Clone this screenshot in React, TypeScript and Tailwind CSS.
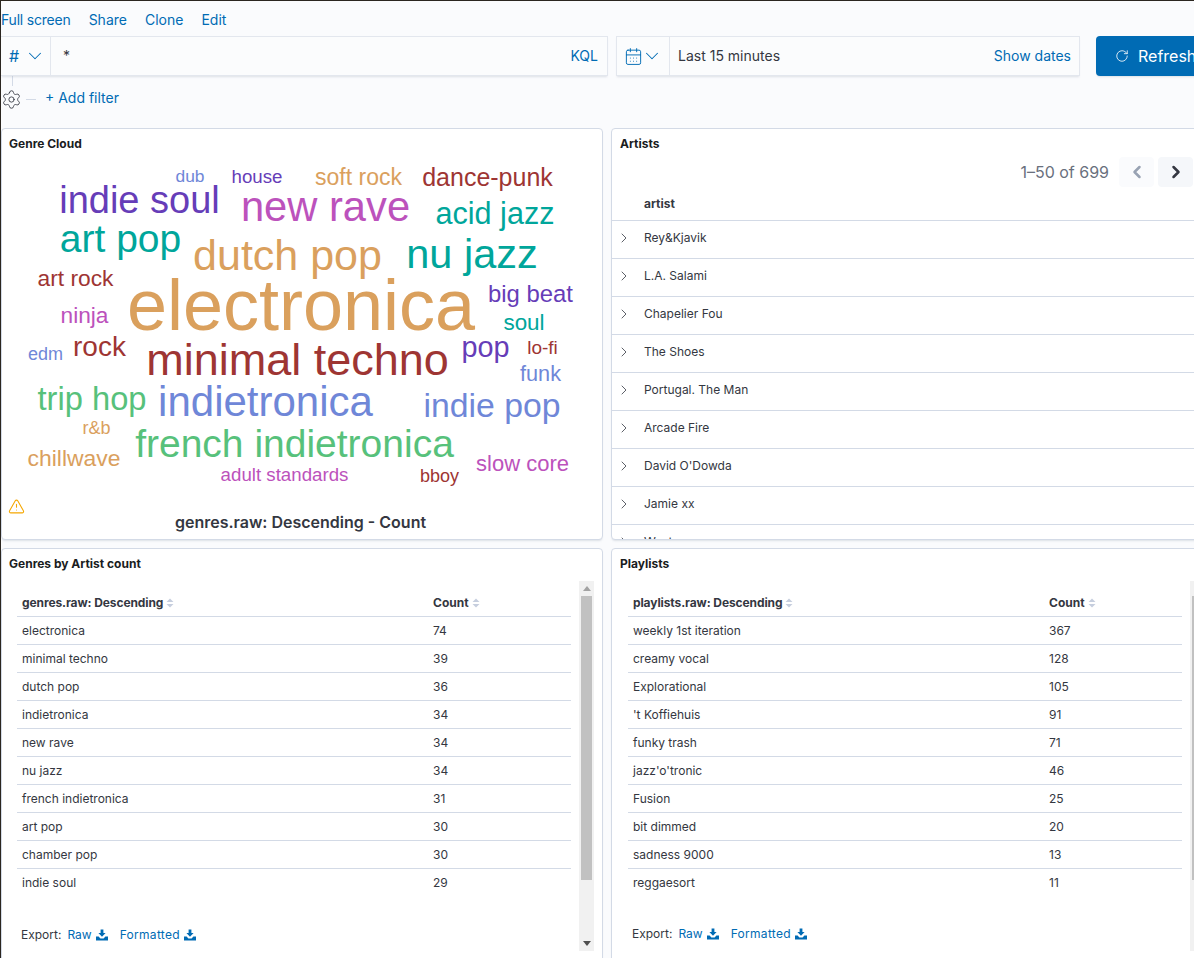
import React from 'react';
import { CalendarDays, ChevronDown, ChevronLeft, ChevronRight, RotateCw, Settings, TriangleAlert } from 'lucide-react';

const ORANGE = '#daa05d';
const TEAL = '#00a69b';
const GREEN = '#57c17b';
const BLUE = '#6f87d8';
const PURPLE = '#663db8';
const PINK = '#bc52bc';
const RED = '#9e3533';

// x is the centre of the word, y its baseline, both in page pixels
const cloudWords: [string, number, number, number, string][] = [
  ['electronica', 301, 330, 72, ORANGE],
  ['minimal techno', 297.5, 375, 45, RED],
  ['dutch pop', 287.5, 270, 43, ORANGE],
  ['nu jazz', 472, 268, 41.5, TEAL],
  ['indietronica', 265.5, 416, 42, BLUE],
  ['new rave', 325.5, 221, 41.7, PINK],
  ['french indietronica', 294.5, 457, 39, GREEN],
  ['indie soul', 139.5, 213, 38, PURPLE],
  ['art pop', 120.5, 252, 39, TEAL],
  ['indie pop', 492, 417, 33.8, BLUE],
  ['trip hop', 92, 410, 32.7, GREEN],
  ['acid jazz', 495, 224, 30.6, TEAL],
  ['dance-punk', 487.5, 186, 25, RED],
  ['soft rock', 358.5, 185, 23, ORANGE],
  ['house', 257, 183, 18.7, PURPLE],
  ['dub', 190, 182, 17.4, BLUE],
  ['art rock', 75.5, 286, 22.8, RED],
  ['big beat', 530.5, 302, 23.9, PURPLE],
  ['ninja', 84.5, 323, 22.7, PINK],
  ['soul', 524, 330, 22.4, TEAL],
  ['rock', 99.5, 356, 28, RED],
  ['edm', 45.5, 360, 18, BLUE],
  ['pop', 485.5, 357, 28.8, PURPLE],
  ['lo-fi', 542.5, 354, 19, RED],
  ['funk', 540.5, 381, 21.7, BLUE],
  ['r&b', 96.5, 434, 18, ORANGE],
  ['chillwave', 74, 466, 22.9, ORANGE],
  ['adult standards', 284.5, 481, 18.7, PINK],
  ['bboy', 439.5, 482, 18, RED],
  ['slow core', 522.5, 471, 22, PINK],
];

const artists = ['Rey&Kjavik', 'L.A. Salami', 'Chapelier Fou', 'The Shoes', 'Portugal. The Man', 'Arcade Fire', "David O'Dowda", 'Jamie xx', 'West'];

const genres: [string, number][] = [
  ['electronica', 74],
  ['minimal techno', 39],
  ['dutch pop', 36],
  ['indietronica', 34],
  ['new rave', 34],
  ['nu jazz', 34],
  ['french indietronica', 31],
  ['art pop', 30],
  ['chamber pop', 30],
  ['indie soul', 29],
];

const playlists: [string, number][] = [
  ['weekly 1st iteration', 367],
  ['creamy vocal', 128],
  ['Explorational', 105],
  ["'t Koffiehuis", 91],
  ['funky trash', 71],
  ["jazz'o'tronic", 46],
  ['Fusion', 25],
  ['bit dimmed', 20],
  ['sadness 9000', 13],
  ['reggaesort', 11],
];

const SortIcon = () => (
  <svg width="8" height="10" viewBox="0 0 8 10" className="ml-[3px] shrink-0">
    <path d="M4 0.5 L7.5 4 H0.5 Z M4 9.5 L7.5 6 H0.5 Z" fill="#c6cede" />
  </svg>
);

const DownloadIcon = () => (
  <svg width="12" height="12" viewBox="0 0 12 12" className="ml-1 shrink-0" fill="#006bb4">
    <path d="M4.6 0.5 H7.4 V4 H9.6 L6 7.8 L2.4 4 H4.6 Z" />
    <path d="M0 7.5 H2.6 L4.4 9.4 H7.6 L9.4 7.5 H12 V11.5 H0 Z" />
  </svg>
);

const Scrollbar = ({ thumb }: { thumb: string }) => (
  <div className="flex flex-col h-[370px] w-[15px] shrink-0 bg-[#f1f1f1]">
    <div className="h-[15px] flex items-center justify-center">
      <svg width="8" height="5" viewBox="0 0 8 5"><path d="M4 0 L8 5 H0 Z" fill="#a3a3a3" /></svg>
    </div>
    <div className={thumb} />
    <div className="flex-1" />
    <div className="h-[15px] flex items-center justify-center">
      <svg width="8" height="5" viewBox="0 0 8 5"><path d="M4 5 L8 0 H0 Z" fill="#505050" /></svg>
    </div>
  </div>
);

const Panel = ({ title, className, titleClass, children }: { title: string; className: string; titleClass: string; children: React.ReactNode }) => (
  <div className={`bg-white border border-[#d3dae6] rounded-[4px] shadow-[0_2px_2px_-1px_rgba(152,162,179,0.3)] overflow-hidden ${className}`}>
    <div className={`h-[29px] pt-[7px] text-xs leading-[15px] font-bold text-[#1a1c21] ${titleClass}`}>{title}</div>
    {children}
  </div>
);

const DataTable = ({ column, rows, firstWidth, thumb, gapLeft, exportTop }: {
  column: string;
  rows: [string, number][];
  firstWidth: string;
  thumb: string;
  gapLeft: string;
  exportTop: string;
}) => (
  <div className={`flex mt-[3px] ${gapLeft}`}>
    <div className="w-[554px] shrink-0 pt-[8px] text-xs text-[#343741]">
      <div className="flex h-[28px] border-b border-[#d3dae6] font-bold items-center pt-[1px]">
        <div className={`${firstWidth} pl-[5px] flex items-center tracking-[-0.1px]`}>
          {column}
          <SortIcon />
        </div>
        <div className="pl-[5px] flex items-center">
          Count
          <SortIcon />
        </div>
      </div>
      {rows.map(([name, count], i) => (
        <div key={name} className={`flex h-[28px] items-center ${i < rows.length - 1 ? 'border-b border-[#d3dae6]' : ''}`}>
          <div className={`${firstWidth} pl-[5px]`}>{name}</div>
          <div className="pl-[5px]">{count}</div>
        </div>
      ))}
      <div className={`flex items-center pl-[4px] ${exportTop}`}>
        <span className="mr-[6px]">Export:</span>
        <a className="flex items-center text-[#006bb4] mr-3">Raw<DownloadIcon /></a>
        <a className="flex items-center text-[#006bb4] tracking-[0.3px]">Formatted<DownloadIcon /></a>
      </div>
    </div>
    <div className="ml-2">
      <Scrollbar thumb={thumb} />
    </div>
  </div>
);

export default function App() {
  return (
    <div className="w-[1194px] h-[958px] overflow-hidden bg-[#fafbfd] border-t border-l border-[#2b2620] text-sm text-[#343741] font-['Inter',sans-serif]">
      <div className="h-[35px] flex items-center gap-[18px] pt-[2px] text-[#006bb4]">
        <a className="tracking-[-0.2px]">Full screen</a>
        <a>Share</a>
        <a>Clone</a>
        <a>Edit</a>
      </div>

      <div className="flex h-[40px]">
        <div className="w-[607px] shrink-0 flex bg-[#fbfcfd] border border-l-0 border-[#e3e7ee] shadow-[0_2px_2px_-1px_rgba(152,162,179,0.3)]">
          <div className="w-[50px] flex items-center pl-2 border-r border-[#e3e7ee] text-[#006bb4]">
            <span className="text-base">#</span>
            <ChevronDown size={22} strokeWidth={1.1} className="ml-[5px]" />
          </div>
          <div className="flex-1 flex items-center pl-3 pr-[9px] justify-between">
            <span>*</span>
            <a className="text-[#006bb4]">KQL</a>
          </div>
        </div>
        <div className="w-[464px] shrink-0 ml-2 flex bg-[#fbfcfd] border border-[#e3e7ee] shadow-[0_2px_2px_-1px_rgba(152,162,179,0.3)]">
          <div className="w-[53px] shrink-0 flex items-center pl-[7px] border-r border-[#e3e7ee] text-[#006bb4]">
            <CalendarDays size={19} strokeWidth={1.2} />
            <ChevronDown size={22} strokeWidth={1.1} className="ml-[-2px]" />
          </div>
          <div className="flex-1 flex items-center px-2 justify-between">
            <span>Last 15 minutes</span>
            <a className="text-[#006bb4]">Show dates</a>
          </div>
        </div>
        <div className="w-[120px] shrink-0 ml-4 bg-[#006bb4] rounded-[4px] flex items-center pl-[19px] text-white text-base shadow-[0_2px_2px_-1px_rgba(152,162,179,0.3)]">
          <RotateCw size={14} strokeWidth={1.4} />
          <span className="ml-[9px]">Refresh</span>
        </div>
      </div>

      <div className="ml-[11px] w-px h-[10px] bg-[#d3dae6]" />
      <div className="h-[42px] flex items-start">
        <Settings size={21} strokeWidth={1} className="text-[#343741] mt-[3px]" />
        <div className="w-[10px] h-px bg-[#d3dae6] ml-[4px] mt-[13px]" />
        <a className="ml-[9px] text-[#006bb4] mt-[2px]">+ Add filter</a>
      </div>

      <div className="grid grid-cols-[602px_600px] gap-x-2 gap-y-2">
        <Panel title="Genre Cloud" titleClass="pl-[7px]" className="h-[412px]">
          <svg width="600" height="340" viewBox="2 158 600 340" className="block font-['Liberation_Sans',sans-serif]">
            {cloudWords.map(([word, x, y, size, color]) => (
              <text key={word} x={x} y={y} fontSize={size} fill={color} textAnchor="middle">{word}</text>
            ))}
          </svg>
          <TriangleAlert size={17} strokeWidth={1.5} className="ml-[6px] text-[#f5a700]" />
          <div className="text-center text-base leading-5 font-semibold text-[#343741] mt-[-3px] pr-[3px]">genres.raw: Descending - Count</div>
        </Panel>

        <Panel title="Artists" titleClass="pl-2" className="h-[412px]">
          <div className="flex h-[30px] mt-[-1px] items-center justify-end pr-[17px] text-[#69707d] text-base">
            <span className="mb-[1px]">1–50 of 699</span>
            <div className="w-[35px] h-[30px] ml-[10px] rounded-[4px] bg-[#fafbfd] flex items-center justify-center text-[#98a2b3]">
              <ChevronLeft size={20} strokeWidth={3} />
            </div>
            <div className="w-[35px] h-[30px] ml-[4px] rounded-[4px] bg-[#f5f7fa] flex items-center justify-center text-[#343741]">
              <ChevronRight size={20} strokeWidth={3} />
            </div>
          </div>
          <div className="h-[34px] border-b border-[#d3dae6] pl-[32px] flex items-center text-xs font-bold">artist</div>
          {artists.map(a => (
            <div key={a} className="h-[38px] shrink-0 border-b border-[#d3dae6] flex items-center text-xs pl-[4px]">
              <ChevronRight size={16} strokeWidth={1.2} className="text-[#343741] mb-[4px]" />
              <span className="ml-[12px] mb-[4px]">{a}</span>
            </div>
          ))}
        </Panel>

        <Panel title="Genres by Artist count" titleClass="pl-[7px]" className="h-[420px]">
          <DataTable
            column="genres.raw: Descending"
            rows={genres}
            firstWidth="w-[411px]"
            thumb="h-[284px] mx-[2px] bg-[#c1c1c1]"
            gapLeft="ml-[15px]"
            exportTop="mt-[30px]"
          />
        </Panel>

        <Panel title="Playlists" titleClass="pl-2" className="h-[420px]">
          <DataTable
            column="playlists.raw: Descending"
            rows={playlists}
            firstWidth="w-[416px]"
            thumb="h-[284px] mx-[2px] bg-[#c1c1c1]"
            gapLeft="ml-[16px]"
            exportTop="mt-[29px]"
          />
        </Panel>
      </div>
    </div>
  );
}
